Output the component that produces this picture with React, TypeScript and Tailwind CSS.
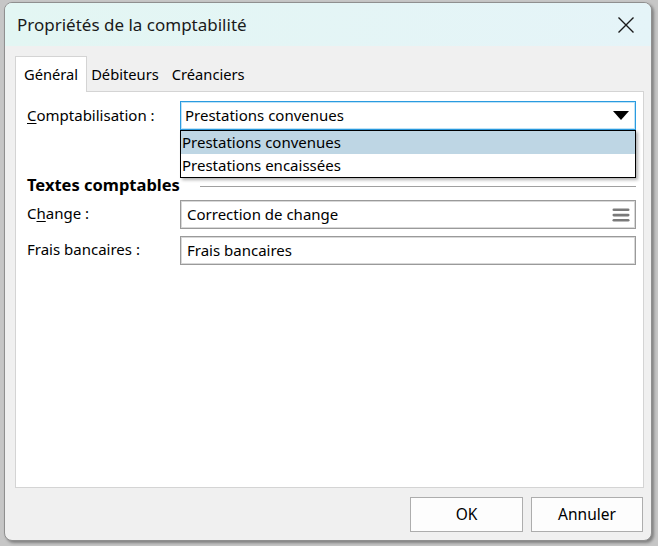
import React from "react"

const font = { fontFamily: '"Noto Sans", "Open Sans", sans-serif' }

function Underlined({ text, index }: { text: string; index: number }) {
    return (
        <>
            {text.slice(0, index)}
            <span className="underline underline-offset-2">{text[index]}</span>
            {text.slice(index + 1)}
        </>
    )
}

export default function App() {
    return (
        <div className="w-[658px] h-[546px] bg-[#c6c6c6] pl-[4px] pt-[2px] overflow-hidden" style={font}>
            <div className="w-[648px] h-[539px] rounded-[8px] border border-[#8f8f8f] bg-[#f0f0f0] overflow-hidden flex flex-col shadow-[2px_2px_3px_rgba(0,0,0,0.35)]">
                {/* Title bar */}
                <div className="h-[43px] shrink-0 flex items-center justify-between pl-[12px] pr-[14px] bg-gradient-to-r from-[#e3f6f3] to-[#e5f4f8]">
                    <span className="text-[17px] text-[#1a1a1a] leading-none">Propriétés de la comptabilité</span>
                    <svg width="18" height="18" viewBox="0 0 18 18" className="mr-[2px]">
                        <path d="M1.5 1.5 L16.5 16.5 M16.5 1.5 L1.5 16.5" stroke="#1a1a1a" strokeWidth="1.4" />
                    </svg>
                </div>

                {/* Tabs */}
                <div className="flex items-end h-[45px] shrink-0 pl-[10px] text-[14.7px] text-black">
                    <div className="h-[36px] px-[8px] bg-white border border-b-0 border-[#d4d4d4] flex items-center relative top-[1px]">Général</div>
                    <div className="h-[33px] pl-[4px] pr-[6px] flex items-center">Débiteurs</div>
                    <div className="h-[33px] px-[7px] flex items-center">Créanciers</div>
                </div>

                {/* Panel */}
                <div className="ml-[10px] mr-[7px] h-[397px] shrink-0 bg-white border border-[#d4d4d4] pl-[11px] pr-[7px] pt-[9px] text-[15px] text-black flex flex-col">
                    <div className="flex items-center h-[29px] relative">
                        <div className="w-[153px] -mt-[1px]"><Underlined text="Comptabilisation :" index={0} /></div>
                        <div className="flex-1 h-[29px] border border-[#2a9be0] shadow-[inset_0_0_0_1px_#bfe3f7] flex items-center justify-between pl-[4px] pr-[6px] bg-white">
                            <span>Prestations convenues</span>
                            <svg width="16" height="9" viewBox="0 0 16 9">
                                <path d="M0 0 H16 L8 9 Z" fill="#000" />
                            </svg>
                        </div>
                        {/* Open list */}
                        <div className="absolute left-[153px] right-0 top-[29px] h-[48px] bg-white border border-black shadow-[2px_2px_3px_rgba(0,0,0,0.3)] flex flex-col z-10">
                            <div className="h-[23px] bg-[#bed6e4] flex items-center pl-[1px]">Prestations convenues</div>
                            <div className="h-[23px] flex items-center pl-[1px]">Prestations encaissées</div>
                        </div>
                    </div>

                    <div className="mt-[45px] flex items-center h-[20px]">
                        <span className="font-bold text-[16.5px]">Textes comptables</span>
                        <div className="flex-1 ml-[20px] h-px bg-[#a0a0a0] mt-[2px]"></div>
                    </div>

                    <div className="mt-[5px] flex items-center h-[29px]">
                        <div className="w-[153px] -mt-[3px]"><Underlined text="Change :" index={1} /></div>
                        <div className="flex-1 h-[29px] border border-[#9a9a9a] shadow-[inset_0_0_0_1px_#d8d8d8] flex items-center justify-between pl-[6px] pr-[5px] bg-white">
                            <span>Correction de change</span>
                            <svg width="18" height="16" viewBox="0 0 18 16">
                                <rect x="0.5" y="1.5" width="17" height="2.6" rx="1.3" fill="#7a7a7a" />
                                <rect x="0.5" y="6.8" width="17" height="2.6" rx="1.3" fill="#7a7a7a" />
                                <rect x="0.5" y="12" width="17" height="2.6" rx="1.3" fill="#7a7a7a" />
                            </svg>
                        </div>
                    </div>

                    <div className="mt-[7px] flex items-center h-[29px]">
                        <div className="w-[153px] -mt-[3px]">Frais bancaires :</div>
                        <div className="flex-1 h-[29px] border border-[#9a9a9a] shadow-[inset_0_0_0_1px_#d8d8d8] flex items-center pl-[6px] bg-white">
                            <span>Frais bancaires</span>
                        </div>
                    </div>
                </div>

                {/* Buttons */}
                <div className="flex justify-end gap-[8px] pr-[8px] pt-[9px] text-[15.5px] text-black">
                    <button className="w-[113px] h-[35px] bg-[#fdfdfd] border border-[#adadad]">OK</button>
                    <button className="w-[112px] h-[35px] bg-[#fdfdfd] border border-[#adadad]">Annuler</button>
                </div>
            </div>
        </div>
    )
}
